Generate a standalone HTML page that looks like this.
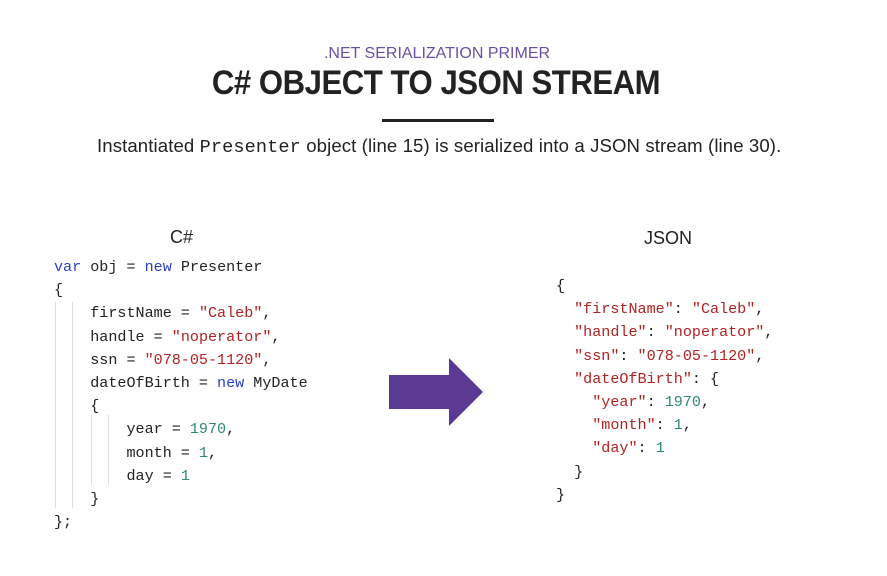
<!DOCTYPE html><html><head><style>
body{margin:0;width:887px;height:576px;background:#fff;position:relative;overflow:hidden;font-family:"Liberation Sans",sans-serif;color:#222}
.a{position:absolute;white-space:pre}
.c{font-family:"Liberation Mono",monospace;font-size:15.1px;line-height:23.2px;color:#222}
.k{color:#2a3fc7}.s{color:#b22222}.n{color:#2e8b6a}
.g{position:absolute;width:1px;background:#ddd}
</style></head><body>
<div class="a" style="left:0;width:874px;text-align:center;top:45px;font-size:16px;color:#6b4fa6">.NET SERIALIZATION PRIMER</div>
<div class="a" style="left:0;width:872px;text-align:center;top:64px;font-size:34px;font-weight:bold;color:#222;letter-spacing:-0.5px;transform:scaleX(0.915)">C# OBJECT TO JSON STREAM</div>
<div class="a" style="left:382px;top:119px;width:112px;height:3px;background:#222"></div>
<div class="a" style="left:97px;top:135px;font-size:18.6px;color:#222;letter-spacing:0.1px">Instantiated <span style="font-family:'Liberation Mono',monospace;font-size:18.6px">Presenter</span> object (line 15) is serialized into a JSON stream (line 30).</div>
<div class="a" style="left:170px;top:227px;font-size:18px">C#</div>
<div class="a" style="left:644px;top:228px;font-size:18px">JSON</div>
<div class="g" style="left:55px;top:302px;height:206px"></div>
<div class="g" style="left:72px;top:302px;height:206px"></div>
<div class="g" style="left:91px;top:415px;height:70px"></div>
<div class="g" style="left:108px;top:415px;height:70px"></div>
<div class="a c" style="left:54px;top:256px"><span class="k">var</span> obj = <span class="k">new</span> Presenter
{
    firstName = <span class="s">"Caleb"</span>,
    handle = <span class="s">"noperator"</span>,
    ssn = <span class="s">"078-05-1120"</span>,
    dateOfBirth = <span class="k">new</span> MyDate
    {
        year = <span class="n">1970</span>,
        month = <span class="n">1</span>,
        day = <span class="n">1</span>
    }
};</div>
<div class="a c" style="left:556px;top:275px">{
  <span class="s">"firstName"</span>: <span class="s">"Caleb"</span>,
  <span class="s">"handle"</span>: <span class="s">"noperator"</span>,
  <span class="s">"ssn"</span>: <span class="s">"078-05-1120"</span>,
  <span class="s">"dateOfBirth"</span>: {
    <span class="s">"year"</span>: <span class="n">1970</span>,
    <span class="s">"month"</span>: <span class="n">1</span>,
    <span class="s">"day"</span>: <span class="n">1</span>
  }
}</div>
<svg class="a" style="left:0;top:0" width="887" height="576"><polygon points="389,375 449,375 449,358 483,392 449,426 449,409 389,409" fill="#5b3a94"/></svg>
</body></html>
